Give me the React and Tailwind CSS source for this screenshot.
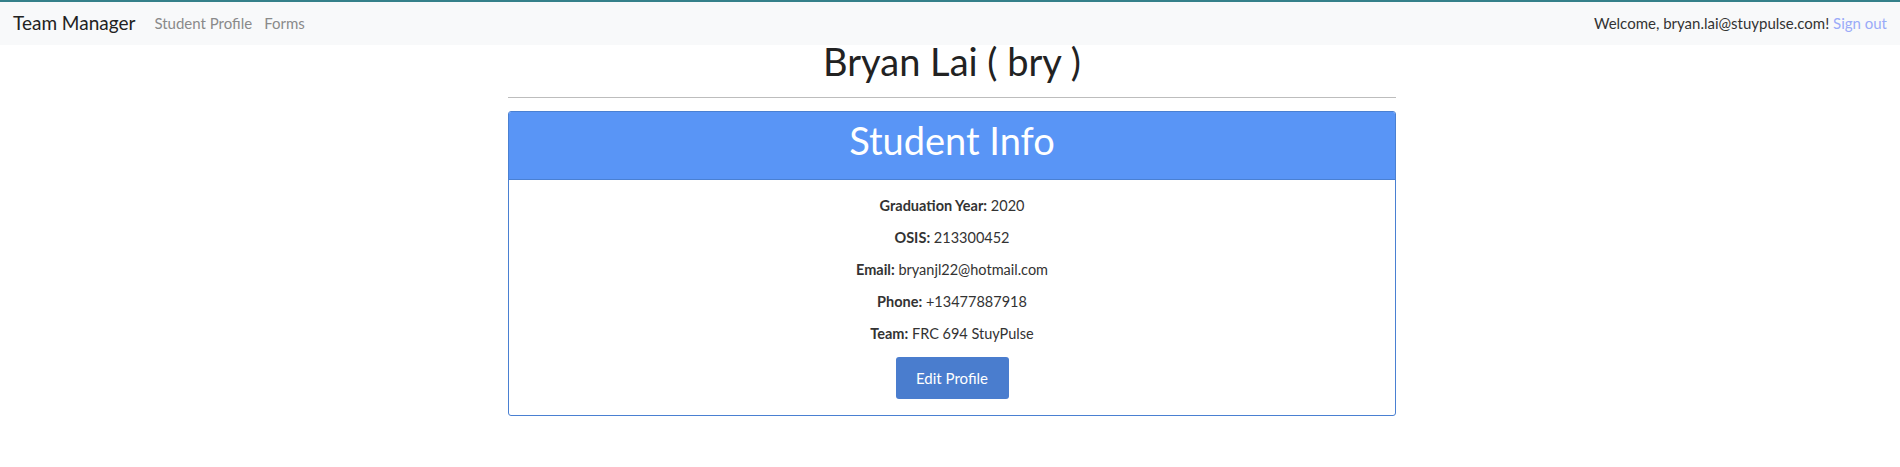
import React from "react";

const rows = [
  { label: "Graduation Year:", value: "2020" },
  { label: "OSIS:", value: "213300452" },
  { label: "Email:", value: "bryanjl22@hotmail.com" },
  { label: "Phone:", value: "+13477887918" },
  { label: "Team:", value: "FRC 694 StuyPulse" },
];

const App = () => {
  return (
    <div className="min-h-[467px] bg-white text-[#212529] font-['Lato',sans-serif]">
      <nav className="h-[45px] border-t-2 border-[#35808a] bg-[#f8f9fa] flex items-center justify-between px-[13px]">
        <div className="flex items-center">
          <span className="text-[19px] text-[#222] mr-[19px]">Team Manager</span>
          <a href="#" className="text-[15px] text-[#8a8a8a] mr-[12px]">
            Student Profile
          </a>
          <a href="#" className="text-[15px] text-[#8a8a8a]">
            Forms
          </a>
        </div>
        <div className="text-[15px]">
          <span className="text-[#333]">Welcome, bryan.lai@stuypulse.com! </span>
          <a href="#" className="text-[#9aabf8]">
            Sign out
          </a>
        </div>
      </nav>

      <div className="w-[892px] mx-auto pl-[4px]">
        <h1 className="text-[38px] leading-[44px] text-center text-[#222] -mt-[6px]">
          Bryan Lai ( bry )
        </h1>
        <hr className="mt-[14px] border-t border-[#bdbdbd]" />

        <div className="mt-[13px] border border-[#4a80d2] rounded-[3px] overflow-hidden">
          <div className="h-[68px] bg-[#5995f6] border-b border-[#4a80d2] pt-[9px]">
            <h2 className="text-[38px] text-white leading-none text-center">Student Info</h2>
          </div>
          <div className="pt-[16px] pb-[16px] flex flex-col items-center">
            {rows.map((row) => (
              <p key={row.label} className="text-[14.5px] leading-[20px] mb-[12px] text-[#333]">
                <span className="font-bold">{row.label}</span> {row.value}
              </p>
            ))}
            <button className="mt-[1px] w-[113px] h-[42px] bg-[#4a7dce] rounded-[3px] text-white text-[15px]">
              Edit Profile
            </button>
          </div>
        </div>
      </div>
    </div>
  );
};

export default App;
